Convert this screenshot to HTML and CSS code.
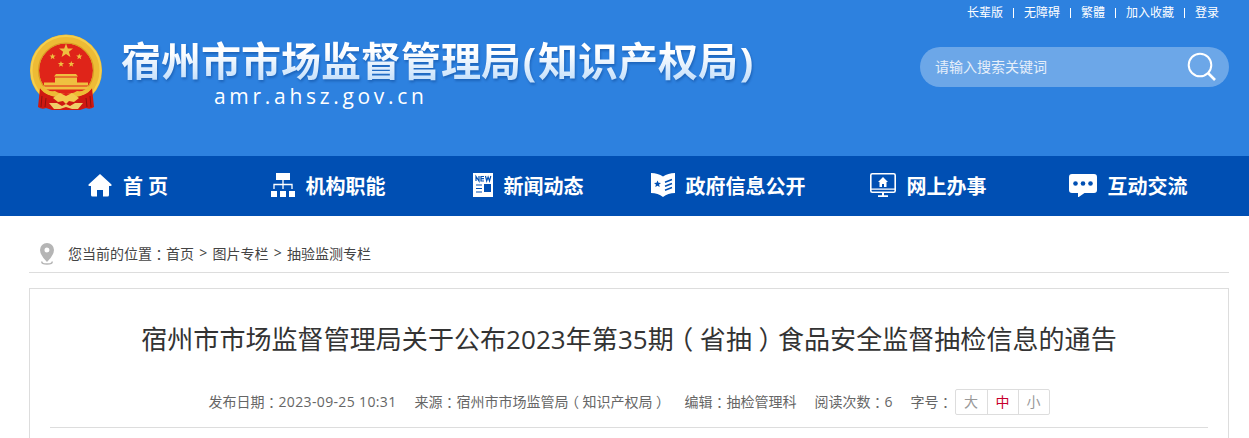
FILE: index.html
```
<!DOCTYPE html>
<html lang="zh-CN">
<head>
  <meta charset="UTF-8" />
  <meta name="viewport" content="width=device-width, initial-scale=1.0"/>
  <title>宿州市市场监督管理局(知识产权局)</title>
  <link rel="stylesheet" href="styles.css">
</head>
<body>
  <header class="header">
    <div class="top-links">
      <a>长辈版</a>
      <a>无障碍</a>
      <a>繁體</a>
      <a>加入收藏</a>
      <a>登录</a>
    </div>
    <div class="header-main">
      <svg class="emblem" width="74" height="78" viewBox="0 0 74 78">
        <circle cx="37" cy="36.500" r="31.500" fill="#df2419" stroke="#edbb35" stroke-width="9"/>
        <circle cx="37" cy="36.500" r="34.500" fill="none" stroke="#f5cf4c" stroke-width="2"/>
        <circle cx="37" cy="36.500" r="27.500" fill="none" stroke="#d89c24" stroke-width="1.200"/>
        <g fill="#efc040">
          <path id="star" d="M37 9.500l1.800 4.900 5.200.2-4.100 3.200 1.500 5.100-4.400-3-4.400 3 1.500-5.100-4.100-3.200 5.200-.2z"/>
          <use href="#star" transform="translate(7.300 15.200) scale(.44)"/>
          <use href="#star" transform="translate(34 15.200) scale(.44)"/>
          <use href="#star" transform="translate(15.700 22.700) scale(.44)"/>
          <use href="#star" transform="translate(26 22.700) scale(.44)"/>
          <path d="M27 40h20l2 2.500H25zM26 43.500h22v5h11v3H15v-3h11z"/>
          <path d="M13 52.500h48l-3 3H16z"/>
        </g>
        <path d="M11 54q3 5 9 7 8 2 17 2t17-2q6-2 9-7l2 19q-4 3-8 1l-6 2H23l-6-2q-4 2-8-1z" fill="#cf1811"/>
        <path d="M13 62l-1 11M17 64l-1 9M57 64l1 9M61 62l1 11" stroke="#8f120e"/>
        <path d="M11 54q7 8 16 9l5-3h10l5 3q9-1 16-9l-3-1q-5 5-12 4-4 3-11 3t-11-3q-7 1-12-4z" fill="#edbb35"/>
        <path d="M24 64l7-5 6 3 6-3 7 5-5 4-5-1-3 3-3-3-5 1z" fill="#f3c94d"/>
        <path d="M20 69h8l5 3 4-2 4 2 5-3h8l-5 6h-6l-6-2-6 2h-6z" fill="#efcf68"/>
      </svg>
      <div class="site-name">
        <h1>宿州市市场监督管理局<span>(</span>知识产权局<span>)</span></h1>
        <p>amr.ahsz.gov.cn</p>
      </div>
      <div class="search">
        <input type="text" placeholder="请输入搜索关键词" />
        <svg width="30" height="30" viewBox="0 0 30 30" fill="none" stroke="#fff" stroke-width="2">
          <circle cx="13" cy="13" r="11.300"/>
          <path d="M21 21l7 7" stroke-width="2.600"/>
        </svg>
      </div>
    </div>
  </header>

  <nav class="nav">
    <a>
      <svg width="24" height="24" viewBox="0 0 24 24" fill="#fff">
        <path d="M12 1L.5 11.500q-.5 1.500 1 1.500H3v9q0 1.500 1.500 1.500H9V17h6v6.500h4.500Q21 23.500 21 22v-9h1.500q1.500 0 1-1.500z"/>
      </svg>
      首 页
    </a>
    <a>
      <svg width="24" height="24" viewBox="0 0 24 24" fill="#fff">
        <path d="M5 0h14v7H5zM0 18h6v6H0zM9 18h6v6H9zM18 18h6v6h-6z"/>
        <path d="M12 7v9M3 16v-4.500h18V16" fill="none" stroke="#fff" stroke-width="1.300"/>
      </svg>
      机构职能
    </a>
    <a>
      <svg width="20" height="24" viewBox="0 0 20 24">
        <path d="M0 0h20v24H0z" fill="#fff"/>
        <path d="M3 8V3.500l3 4.500V3M11 3.500H8V8h3M8 5.700h3M12.500 3l1.200 5 1.400-4 1.400 4L17.800 3M3 12h6M3 15.500h6M3 19h6" fill="none" stroke="#004fb3" stroke-width="1.200"/>
        <path d="M11 11h7v8h-7z" fill="#004fb3"/>
      </svg>
      新闻动态
    </a>
    <a>
      <svg width="24" height="24" viewBox="0 0 24 24">
        <path d="M0 0Q7 0 12 3.500 17 0 24 0v20q-7 0-12 4-5-4-12-4z" fill="#fff"/>
        <path d="M6.500 7.500l1 2.300 2.500.2-1.900 1.600.6 2.400-2.200-1.300L4.300 14l.6-2.400L3 10l2.500-.2z" fill="#004fb3"/>
        <path d="M14 9.200l7-2.700M14 13.200l7-2.700M14 17.200l7-2.700" stroke="#004fb3" stroke-width="1.500"/>
      </svg>
      政府信息公开
    </a>
    <a>
      <svg width="26" height="24" viewBox="0 0 26 24" fill="#fff">
        <rect x=".8" y=".8" width="24.400" height="18.400" rx="1.500" fill="none" stroke="#fff" stroke-width="1.600"/>
        <path d="M1 15.500h24v1.300H1zM12 19h2v3.500h-2zM8 22.300h10V24H8zM13 4l-5 5h1.500v5H12v-3h2v3h2.500V9H18z"/>
      </svg>
      网上办事
    </a>
    <a>
      <svg width="28" height="24" viewBox="0 0 28 24">
        <path d="M3 1h22q3 0 3 3v13q0 3-3 3H15.500L9 24.500V20H3q-3 0-3-3V4q0-3 3-3z" fill="#fff"/>
        <g fill="#004fb3"><circle cx="6.500" cy="10.500" r="2.300"/><circle cx="14" cy="10.500" r="2.300"/><circle cx="21.500" cy="10.500" r="2.300"/></g>
      </svg>
      互动交流
    </a>
  </nav>

  <main class="main">
    <div class="breadcrumb">
      <svg width="14" height="22" viewBox="0 0 14 22">
        <path fill-rule="evenodd" d="M7 0a7 7 0 0 1 7 7q0 5-7 12Q0 12 0 7a7 7 0 0 1 7-7zm0 4.500a2.500 2.500 0 1 0 0 5 2.500 2.500 0 0 0 0-5z" fill="#b5b5b5"/>
        <path d="M2 18.500q-1 2.500 5 2.500t5-2.500" fill="none" stroke="#b5b5b5" stroke-width="1.500"/>
      </svg>
      <span>您当前的位置<span class="punct">：</span></span>
      <a>首页</a><i>&gt;</i><a>图片专栏</a><i>&gt;</i><a>抽验监测专栏</a>
    </div>

    <article class="article">
      <h2>宿州市市场监督管理局关于公布2023年第35期<span class="punct">（</span>省抽<span class="punct">）</span>食品安全监督抽检信息的通告</h2>
      <div class="info">
        <span>发布日期<span class="punct">：</span><span class="date">2023-09-25 10:31</span></span>
        <span>来源<span class="punct">：</span>宿州市市场监管局<span class="punct">（</span>知识产权局<span class="punct">）</span></span>
        <span>编辑<span class="punct">：</span>抽检管理科</span>
        <span>阅读次数<span class="punct">：</span>6</span>
        <span>字号<span class="punct">：</span></span>
        <div class="font-size">
          <a>大</a><a class="active">中</a><a>小</a>
        </div>
      </div>
    </article>
  </main>
</body>
</html>
```
FILE: styles.css
```
* {
  margin: 0;
  padding: 0;
  box-sizing: border-box;
}

body {
  font-family: "Open Sans", "Noto Sans CJK SC", sans-serif;
  font-size: 14px;
  color: #444;
  background: #fff;
  height: 438px;
  overflow: hidden;
}

.header {
  height: 156px;
  padding: 0 20px 0 29px;
  background: #2d81df;
  color: #fff;
}

.top-links {
  display: flex;
  justify-content: flex-end;
  height: 25px;
  padding-right: 10px;
  font-size: 12px;
  line-height: 25px;
}

.top-links a {
  display: flex;
  align-items: center;
}

.top-links a + a::before {
  content: "";
  width: 1px;
  height: 10px;
  margin: 0 10px;
  background: #fff;
}

.header-main {
  display: flex;
  align-items: flex-start;
}

.emblem {
  margin-top: 9px;
}

.site-name {
  margin-left: 18px;
}

.site-name h1 {
  height: 60px;
  padding-top: 14px;
  font-size: 40px;
  line-height: 44px;
  font-weight: 700;
  white-space: nowrap;
  background: linear-gradient(#fff 45%, #c5e0fb 92%);
  -webkit-background-clip: text;
  background-clip: text;
  color: transparent;
  filter: drop-shadow(1px 2px 1px rgba(0, 50, 120, 0.35));
}

.site-name h1 span {
  display: inline-block;
  width: 17px;
  text-align: center;
}

.site-name p {
  margin-left: 93px;
  font-size: 21px;
  line-height: 22px;
  letter-spacing: 3.7px;
}

.search {
  display: flex;
  align-items: center;
  width: 309px;
  height: 40px;
  margin: 22px 0 0 auto;
  padding: 0 12px 0 15px;
  border-radius: 20px;
  background: rgba(255, 255, 255, 0.3);
}

.search input {
  flex: 1;
  min-width: 0;
  padding-bottom: 2px;
  border: none;
  outline: none;
  background: none;
  font: inherit;
  color: #fff;
}

.search input::placeholder {
  color: #e6effa;
}

.nav {
  display: flex;
  height: 60px;
  padding: 0 21px 2px 28px;
  background: #004fb3;
  color: #fff;
  font-size: 20px;
  font-weight: 700;
}

.nav a {
  flex: 1;
  display: flex;
  align-items: center;
  justify-content: center;
  gap: 11px;
  white-space: nowrap;
}

.main {
  padding: 0 20px 0 29px;
}

.breadcrumb {
  display: flex;
  align-items: center;
  height: 57px;
  padding: 17px 0 0 11px;
  border-bottom: 1px solid #ddd;
}

.breadcrumb svg {
  margin: 2px 14px 0 0;
}

.breadcrumb i {
  width: 18.5px;
  font-style: normal;
  text-align: center;
}

.punct {
  display: inline-block;
  width: 1em;
  text-align: center;
  font-feature-settings: "halt";
}

.article {
  height: 160px;
  margin-top: 15px;
  padding: 0 20px;
  border: 1px solid #ddd;
}

.article h2 {
  padding-top: 30px;
  font-size: 26px;
  line-height: 40px;
  font-weight: 400;
  letter-spacing: 0.06px;
  text-align: center;
  white-space: nowrap;
  color: #333;
}

.info {
  display: flex;
  align-items: center;
  justify-content: center;
  gap: 18px;
  height: 69px;
  padding-top: 16px;
  border-bottom: 1px solid #ddd;
  color: #666;
  white-space: nowrap;
}

.date {
  letter-spacing: 0.35px;
}

.font-size {
  display: flex;
  margin: 2px 0 0 -16px;
  border: 1px solid #ddd;
  border-radius: 2px;
}

.font-size a {
  width: 31px;
  height: 24px;
  line-height: 24px;
  text-align: center;
  color: #999;
}

.font-size a + a {
  border-left: 1px solid #ddd;
}

.font-size .active {
  color: #c7002c;
}
```
